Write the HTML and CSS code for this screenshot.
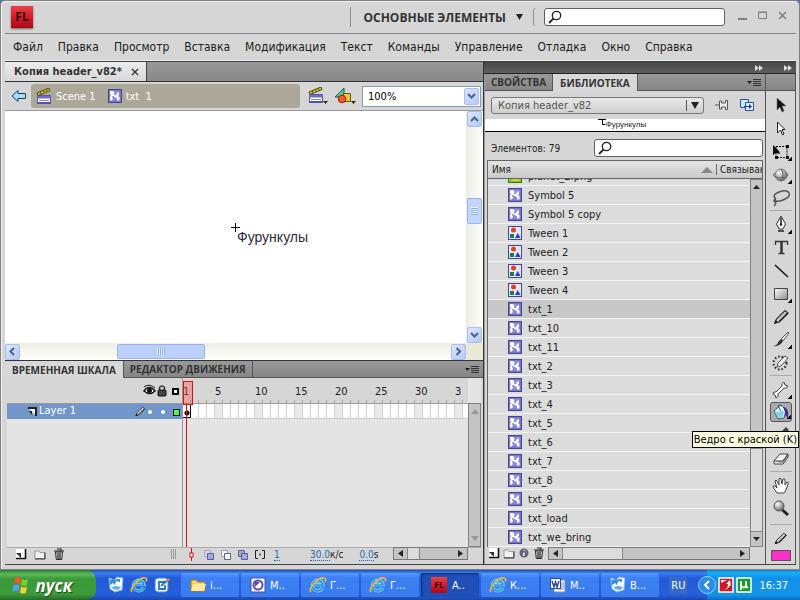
FILE: index.html
```
<!DOCTYPE html>
<html lang="ru">
<head>
    <meta charset="UTF-8">
    <meta name="viewport" content="width=device-width, initial-scale=1.0">
    <title>Копия header_v82</title>
    <link rel="stylesheet" href="styles.css">
</head>
<body>
    <!-- Общие иконки -->
    <svg class="sprite" width="0" height="0">
        <defs>
            <linearGradient id="gRed" x1="0" y1="0" x2="0" y2="1"><stop offset="0" stop-color="#e8434a"/><stop offset=".5" stop-color="#d81a26"/><stop offset="1" stop-color="#a80d18"/></linearGradient>
            <linearGradient id="gMetal" x1="0" y1="0" x2="1" y2="1"><stop offset="0" stop-color="#fff"/><stop offset="1" stop-color="#8a8a8a"/></linearGradient>
            <radialGradient id="gBall" cx=".35" cy=".3" r=".7"><stop offset="0" stop-color="#fff"/><stop offset="1" stop-color="#6c6c6c"/></radialGradient>
        </defs>
        <symbol id="i-search" viewBox="0 0 14 14"><circle cx="8.500" cy="5.500" r="4.200" fill="none" stroke="#222" stroke-width="1.300"/><path d="M5.500 8.500L1 13" stroke="#222" stroke-width="1.800"/></symbol>
        <symbol id="i-scene" viewBox="0 0 16 16"><path d="M1 5L13 0L14 2.500L2 7.500Z" fill="#e0c81e" stroke="#4c4410"/><path d="M4 4l1.500 2M7 2.600l1.500 2M10 1.400l1.500 2" stroke="#4c4410"/><path d="M1.500 7.500H14.500V15.500H1.500Z" fill="#fff" stroke="#5454a8"/><path d="M1.500 8h13v2.500h-13z" fill="#6f6fc4"/><path d="M3 12.500h10" stroke="#8c8cd0"/><path d="M1 15h14" stroke="#5050b0" stroke-width="2"/></symbol>
        <symbol id="i-clip" viewBox="0 0 14 14"><rect x=".5" y=".5" width="13" height="13" fill="#7878c8" stroke="#44449c"/><path d="M2 2h9.500v9.500H2z" fill="#8c8cd8"/><path d="M2 2h3l1.500 1.500L6 6h2l1-2 2-1v3L9.500 7l2 1v3.500H9V9L6.500 8 5 6.500 4 8l1 2-1.500 1.500H2V8l1-2-1-1z" fill="#fff"/></symbol>
        <symbol id="i-tween" viewBox="0 0 14 14"><rect x=".5" y=".5" width="13" height="13" fill="#e4e8ff" stroke="#44449c"/><circle cx="5.500" cy="4" r="2.500" fill="#e8401c"/><rect x="2" y="8" width="4" height="4" fill="#108050"/><path d="M7 12L9.700 7L12.500 12Z" fill="#2b38d0"/></symbol>
        <symbol id="i-png" viewBox="0 0 14 14"><rect x=".5" y=".5" width="13" height="13" fill="#7ac928" stroke="#35791c"/><path d="M3 12L6 8l2 2 2-3 2 5z" fill="#e8c63c"/></symbol>
        <symbol id="i-menu" viewBox="0 0 14 10"><path d="M0 3h5L2.500 6z" fill="#222"/><path d="M6 1.500h8M6 3.500h8M6 5.500h8M6 7.500h8" stroke="#333"/></symbol>
        <symbol id="i-new" viewBox="0 0 12 12"><path d="M1 1h9v9H1z" fill="#fff"/><path d="M10.500 1v9.500H1" fill="none" stroke="#111" stroke-width="1.600"/><path d="M1 5h5v5z" fill="#333"/></symbol>
        <symbol id="i-folder" viewBox="0 0 12 12"><path d="M1 3h4l1 1.500h4.500v6H1z" fill="#f2f2f2" stroke="#999"/><path d="M11 4.500v6.500H1" fill="none" stroke="#333"/></symbol>
        <symbol id="i-trash" viewBox="0 0 12 12"><path d="M2.500 4h7l-.8 7.500H3.300z" fill="#ddd" stroke="#222"/><path d="M1 3h10M4 1h4v2M5 5v6M7 5v6" fill="none" stroke="#222" stroke-width="1.200"/></symbol>
        <symbol id="i-pencil" viewBox="0 0 18 18"><path d="M3 15l1.500-4L13 2.500l3 2.500-9 9z" fill="url(#gMetal)" stroke="#333" stroke-width="1.200"/><path d="M7 14l9-9" stroke="#222" stroke-width="1.500"/><path d="M2 16l1.500-4 2.500 2.500z" fill="#111"/></symbol>
        <symbol id="i-ie" viewBox="0 0 18 18"><path d="M13.700 11.500A5.300 5.300 0 1 1 14 8.500H6" fill="none" stroke="#6fd0ff" stroke-width="3.500"/><path d="M13.700 11.500A5.300 5.300 0 1 1 14 9H6" fill="none" stroke="#1e7ad4" stroke-width="1.200"/><path d="M2 16C-1 13 9 1 15 2c2 0 2 2 1 3.500" fill="none" stroke="#f2b632" stroke-width="1.700"/></symbol>
        <symbol id="i-flash" viewBox="0 0 22 22"><rect width="22" height="22" fill="url(#gRed)"/><text x="11" y="15" text-anchor="middle" font-family="Open Sans" font-weight="700" font-size="12" fill="#260306">FL</text></symbol>
        <symbol id="i-sync" viewBox="0 0 18 18"><path d="M2 2l5 2 3-3 6 1-1 12-7 2-5-3z" fill="#f4f9ff" stroke="#7fb4ea"/><path d="M3 4v5l3-2 2 2 1-4 4 1V3" fill="#2f8ae0"/><path d="M5 11l4-1 5 1-3 3-5-1z" fill="#5aaef0"/></symbol>
    </svg>

    <div class="window">
        <header class="titlebar">
            <svg class="app-logo" width="22" height="22"><use href="#i-flash"/></svg>
            <button class="workspace">ОСНОВНЫЕ ЭЛЕМЕНТЫ <svg width="7" height="6"><path d="M0 0h7L3.500 6z" fill="#222"/></svg></button>
            <label class="search search-top"><svg width="14" height="14"><use href="#i-search"/></svg><input type="text" aria-label="Поиск"></label>
            <div class="win-btns">
                <button aria-label="Свернуть"><svg width="10" height="10"><path d="M0 8h9" stroke="#808080" stroke-width="2"/></svg></button>
                <button aria-label="Развернуть"><svg width="10" height="10"><path d="M.5 1.500h8v6h-8zM0 1h9" fill="none" stroke="#808080"/></svg></button>
                <button aria-label="Закрыть"><svg width="10" height="10"><path d="M1 1l7 7M8 1l-7 7" stroke="#808080" stroke-width="1.500"/></svg></button>
            </div>
        </header>

        <nav class="menu">
            <a href="#">Файл</a><a href="#">Правка</a><a href="#">Просмотр</a><a href="#">Вставка</a><a href="#">Модификация</a><a href="#">Текст</a><a href="#">Команды</a><a href="#">Управление</a><a href="#">Отладка</a><a href="#">Окно</a><a href="#">Справка</a>
        </nav>

        <div class="workarea">
            <main class="document">
                <div class="doc-tabs">
                    <button class="doc-tab">Копия header_v82* <svg width="8" height="8"><path d="M1 1l6 6M7 1L1 7" stroke="#333" stroke-width="1.300"/></svg></button>
                </div>

                <div class="scene-bar">
                    <button class="back" aria-label="Назад"><svg width="16" height="14"><path d="M1 7l6-5.500v3h7.500v5H7v3z" fill="#a6dcff" stroke="#26395c"/></svg></button>
                    <div class="crumbs">
                        <a href="#"><svg width="16" height="16"><use href="#i-scene"/></svg>Scene 1</a>
                        <a href="#"><svg width="14" height="14"><use href="#i-clip"/></svg>txt&nbsp; 1</a>
                    </div>
                    <button aria-label="Сцена"><svg width="20" height="18"><use href="#i-scene" width="16" height="16"/><path d="M15 14h5l-2.500 3z" fill="#332c00"/></svg></button>
                    <button aria-label="Символ"><svg width="22" height="18"><path d="M1 10L10 1v9z" fill="#52c99a" stroke="#205c48"/><path d="M9.500 6.500h7v8h-7z" fill="#eec638" stroke="#6a5410"/><circle cx="8" cy="12" r="3.800" fill="#f05a30" stroke="#9a2408"/><path d="M17 14h5l-2.500 3z" fill="#332c00"/></svg></button>
                    <div class="zoom-box">
                        <select aria-label="Масштаб"><option>100%</option></select>
                        <span class="xp-btn"><svg width="9" height="7"><path d="M1 1l3.500 3.500L8 1" fill="none" stroke="#4d6185" stroke-width="2"/></svg></span>
                    </div>
                </div>

                <div class="stage-wrap">
                    <div class="stage">
                        <svg class="cross" width="9" height="9"><path d="M0 4.500h9M4.500 0v9" stroke="#000"/></svg>
                        <span class="stage-text">Фурункулы</span>
                    </div>
                    <div class="xp-scroll xp-vert">
                        <span class="xp-btn"><svg width="9" height="7"><path d="M1 5l3.500-3.500L8 5" fill="none" stroke="#4d6185" stroke-width="2"/></svg></span>
                        <span class="xp-thumb"></span>
                        <span class="xp-btn"><svg width="9" height="7"><path d="M1 1l3.500 3.500L8 1" fill="none" stroke="#4d6185" stroke-width="2"/></svg></span>
                    </div>
                    <div class="xp-scroll xp-horz">
                        <span class="xp-btn"><svg width="7" height="9"><path d="M5 1L1.500 4.500L5 8" fill="none" stroke="#4d6185" stroke-width="2"/></svg></span>
                        <span class="xp-thumb"></span>
                        <span class="xp-btn"><svg width="7" height="9"><path d="M1.500 1L5 4.500L1.500 8" fill="none" stroke="#4d6185" stroke-width="2"/></svg></span>
                    </div>
                </div>

                <section class="timeline">
                    <div class="panel-tabs">
                        <button class="active">ВРЕМЕННАЯ ШКАЛА</button><button>РЕДАКТОР ДВИЖЕНИЯ</button>
                        <svg class="panel-menu" width="14" height="10"><use href="#i-menu"/></svg>
                    </div>
                    <div class="tl-body">
                        <div class="layers">
                            <div class="tl-head">
                                <svg width="40" height="14"><path d="M1 7q5-7 11 0q-5 5-11 0z" fill="#fff" stroke="#111" stroke-width="1.500"/><circle cx="6.500" cy="6.500" r="2.500" fill="#111"/><path d="M1 3q5-4 11 1" fill="none" stroke="#111"/><rect x="15" y="6" width="8" height="6" rx="1" fill="#444" stroke="#111"/><path d="M16.500 6V3.500q2.500-3 5 0V6" fill="none" stroke="#333" stroke-width="1.500"/><rect x="30" y="5" width="5" height="5" fill="#fff" stroke="#000" stroke-width="2"/></svg>
                            </div>
                            <div class="layer">
                                <svg width="9" height="9"><path d="M0 1h8v8" fill="none" stroke="#222" stroke-width="2"/><path d="M1 2h6v6z" fill="#fff"/><path d="M1 4h3v4z" fill="#222"/></svg>
                                <span class="layer-name">Layer 1</span>
                                <svg width="48" height="14"><use href="#i-pencil" width="12" height="13"/><circle cx="16" cy="7" r="2" fill="#fff"/><circle cx="29" cy="7" r="2" fill="#fff"/><rect x="39.500" y="4.500" width="6" height="6" fill="#4cff4c" stroke="#111"/></svg>
                            </div>
                        </div>
                        <div class="frames">
                            <div class="playhead"></div>
                            <div class="ruler"><span>1</span><span>5</span><span>10</span><span>15</span><span>20</span><span>25</span><span>30</span><span>3</span></div>
                            <div class="cells"><span class="key"></span></div>
                        </div>
                        <div class="vscroll tl-scroll">
                            <svg width="8" height="5"><path d="M0 5h8L4 0z" fill="#999"/></svg>
                            <svg width="8" height="5"><path d="M0 0h8L4 5z" fill="#999"/></svg>
                        </div>
                    </div>
                    <div class="tl-foot">
                        <div class="foot-icons">
                            <svg width="12" height="12"><use href="#i-new"/></svg>
                            <svg width="12" height="12"><use href="#i-folder"/></svg>
                            <svg width="12" height="12"><use href="#i-trash"/></svg>
                            <svg class="grip" width="6" height="12"><path d="M.5 1v10M2.500 1v10M4.500 1v10" stroke="#999"/></svg>
                        </div>
                        <svg class="onion" width="80" height="13"><path d="M4.500 0v13" stroke="#d8101c"/><rect x="3" y="5" width="3" height="4" fill="#fff" stroke="#d8101c"/><g stroke="#5c5c9c"><path d="M17.500 2.500h6v6h-6z" fill="#d6d6e8" stroke="#a8a8cc"/><path d="M20.500 5.500h6v6h-6z" fill="#a8a8d8"/><path d="M34.500 2.500h6v6h-6z" fill="#fff" stroke="#9898c4"/><path d="M37.500 5.500h6v6h-6z" fill="#fff"/><path d="M51.500 2.500h6v6h-6z" fill="#a8a8d8"/><path d="M54.500 5.500h6v6h-6z" fill="#a8a8d8"/><path d="M71 2.500h-2.500v8H71M75 2.500h2.500v8H75" fill="none" stroke="#222"/><path d="M72 6.500h2" stroke-width="2"/></g></svg>
                        <a href="#" class="val-frame">1</a>
                        <span class="val-fps"><a href="#">30.0</a>к/с</span>
                        <span class="val-time"><a href="#">0.0</a>s</span>
                        <div class="hscroll tl-hscroll">
                            <svg width="5" height="7"><path d="M5 0v7L0 3.500z" fill="#222"/></svg><i></i><svg width="5" height="7"><path d="M0 0v7l5-3.500z" fill="#222"/></svg>
                        </div>
                    </div>
                </section>
            </main>

            <aside class="dock">
                <div class="dock-bar">
                    <svg width="8" height="6"><path d="M0 0l4 3-4 3zM4 0l4 3-4 3z" fill="#ddd"/></svg>
                    <svg width="8" height="6"><path d="M0 0l4 3-4 3zM4 0l4 3-4 3z" fill="#ddd"/></svg>
                </div>
                <section class="library">
                    <div class="panel-tabs">
                        <button>СВОЙСТВА</button><button class="active">БИБЛИОТЕКА</button>
                        <svg class="panel-menu" width="14" height="10"><use href="#i-menu"/></svg>
                    </div>
                    <div class="lib-doc">
                        <div class="lib-select">
                            <select aria-label="Документ"><option>Копия header_v82</option></select>
                            <span><svg width="8" height="7"><path d="M0 0h8L4 7z" fill="#222"/></svg></span>
                        </div>
                        <button aria-label="Закрепить"><svg width="14" height="12"><path d="M0 6h5" stroke="#555"/><path d="M4.500 2v8h2v-2h4v2.500h2v-9h-2V4h-4V2z" fill="#eee" stroke="#555"/></svg></button>
                        <button aria-label="Новая библиотека"><svg width="15" height="12"><path d="M.5.500h8v8h-8z" fill="#c8ecff" stroke="#3c4c90"/><path d="M5.500 3.500h8v8h-8z" fill="#d8f0ff" stroke="#3c4c90"/><path d="M4 7h5V5l3 2.500L9 10V8H4z" fill="#2434d8"/></svg></button>
                    </div>
                    <div class="preview"><svg width="8" height="7"><path d="M0 .5h8M4.500 0v5.500h3" fill="none" stroke="#000"/></svg>Фурункулы</div>
                    <div class="lib-find">
                        <label for="libFind">Элементов: 79</label>
                        <div class="search"><svg width="14" height="14"><use href="#i-search"/></svg><input id="libFind" type="text"></div>
                    </div>
                    <div class="lib-head">
                        <span class="col-name">Имя</span>
                        <svg width="12" height="6"><path d="M0 6h12L6 0z" fill="#888"/></svg>
                        <span class="col-link">Связыван</span>
                    </div>
                    <div class="lib-body">
                        <ul class="lib-list">
                            <li><svg width="14" height="14"><use href="#i-png"/></svg>planet_2.png</li>
                            <li><svg width="14" height="14"><use href="#i-clip"/></svg>Symbol 5</li>
                            <li><svg width="14" height="14"><use href="#i-clip"/></svg>Symbol 5 copy</li>
                            <li><svg width="14" height="14"><use href="#i-tween"/></svg>Tween 1</li>
                            <li><svg width="14" height="14"><use href="#i-tween"/></svg>Tween 2</li>
                            <li><svg width="14" height="14"><use href="#i-tween"/></svg>Tween 3</li>
                            <li><svg width="14" height="14"><use href="#i-tween"/></svg>Tween 4</li>
                            <li class="selected"><svg width="14" height="14"><use href="#i-clip"/></svg>txt_1</li>
                            <li><svg width="14" height="14"><use href="#i-clip"/></svg>txt_10</li>
                            <li><svg width="14" height="14"><use href="#i-clip"/></svg>txt_11</li>
                            <li><svg width="14" height="14"><use href="#i-clip"/></svg>txt_2</li>
                            <li><svg width="14" height="14"><use href="#i-clip"/></svg>txt_3</li>
                            <li><svg width="14" height="14"><use href="#i-clip"/></svg>txt_4</li>
                            <li><svg width="14" height="14"><use href="#i-clip"/></svg>txt_5</li>
                            <li><svg width="14" height="14"><use href="#i-clip"/></svg>txt_6</li>
                            <li><svg width="14" height="14"><use href="#i-clip"/></svg>txt_7</li>
                            <li><svg width="14" height="14"><use href="#i-clip"/></svg>txt_8</li>
                            <li><svg width="14" height="14"><use href="#i-clip"/></svg>txt_9</li>
                            <li><svg width="14" height="14"><use href="#i-clip"/></svg>txt_load</li>
                            <li><svg width="14" height="14"><use href="#i-clip"/></svg>txt_we_bring</li>
                        </ul>
                        <div class="vscroll">
                            <svg width="7" height="4"><path d="M0 4h7L3.500 0z" fill="#222"/></svg>
                            <i></i>
                            <svg width="7" height="4"><path d="M0 0h7L3.500 4z" fill="#222"/></svg>
                        </div>
                    </div>
                    <div class="lib-foot">
                        <svg width="12" height="12"><use href="#i-new"/></svg>
                        <svg width="12" height="12"><use href="#i-folder"/></svg>
                        <svg width="12" height="12"><circle cx="6" cy="6" r="4.500" fill="#5c6478"/><path d="M6.500 3v1M6 5.500L5.500 9" stroke="#fff" stroke-width="1.500"/></svg>
                        <svg width="12" height="12"><use href="#i-trash"/></svg>
                        <div class="hscroll">
                            <svg width="5" height="7"><path d="M5 0v7L0 3.500z" fill="#222"/></svg><i></i><svg width="5" height="7"><path d="M0 0v7l5-3.500z" fill="#222"/></svg>
                        </div>
                    </div>
                </section>

                <div class="tools">
                    <div class="tools-head"></div>
                    <button aria-label="Выделение"><svg width="20" height="20"><path d="M6 2v12l3-3 2 5 2-1-2-5h4z" fill="#111" stroke="#666" stroke-width=".5"/></svg></button>
                    <button aria-label="Частичное выделение"><svg width="20" height="20"><path d="M6.500 3v11l3-3 2 5 1.500-1-2-4.500h3z" fill="#fff" stroke="#222"/></svg></button>
                    <button class="more" aria-label="Свободное преобразование"><svg width="20" height="20"><path d="M5 4.500h11v11H5z" fill="none" stroke="#111" stroke-dasharray="2 1"/><path d="M2 3v10l3-2 4 1-1-3z" fill="#111"/><path d="M15 3h3v3h-3zM15 14h3v3h-3zM4 14h3v3H4z" fill="#111"/></svg></button>
                    <button class="more" aria-label="Поворот 3D"><svg width="20" height="20"><circle cx="10" cy="10" r="6" fill="url(#gBall)" stroke="#777"/><path d="M4 8q-5 3 5 5q10 0 7-5M10 4q4 6 0 12" fill="none" stroke="#666"/></svg></button>
                    <button aria-label="Лассо"><svg width="20" height="20"><path d="M5 11Q0 7 8 4t10 1t-6 7t-8-1q-2 2 0 3t-1 4" fill="none" stroke="#555" stroke-width="1.500"/></svg></button>
                    <hr>
                    <button class="more" aria-label="Перо"><svg width="20" height="20"><path d="M10 1l4.500 8-2.500 5H8L5.500 9z" fill="#fff" stroke="#333"/><path d="M10 3v6M7 16h6" stroke="#222" stroke-width="1.500"/><circle cx="10" cy="9.500" r="1.300" fill="#222"/></svg></button>
                    <button aria-label="Текст"><svg width="20" height="20"><path d="M10.500 3v12" stroke="#333" stroke-width="2.500"/><path d="M4.500 7V3.500h12V7M7.500 15.500h6" fill="none" stroke="#333" stroke-width="1.300"/></svg></button>
                    <button aria-label="Линия"><svg width="20" height="20"><path d="M4 4l13 12" stroke="#111" stroke-width="1.500"/></svg></button>
                    <button class="more" aria-label="Прямоугольник"><svg width="20" height="20"><path d="M3.500 4.500h13v11h-13z" fill="url(#gMetal)" stroke="#444"/></svg></button>
                    <button aria-label="Карандаш"><svg width="18" height="18"><use href="#i-pencil"/></svg></button>
                    <button class="more" aria-label="Кисть"><svg width="20" height="20"><path d="M10 9l7-7 1 1-6 8z" fill="#eee" stroke="#555"/><path d="M10 9l2 2q-3 6-10 5q5-1 5-4z" fill="#333"/></svg></button>
                    <button aria-label="Декор"><svg width="20" height="20"><circle cx="9" cy="10" r="6.500" fill="none" stroke="#222" stroke-width="2" stroke-dasharray="1.500 2"/><path d="M6 14l1-4 7-7 3 2-7 8z" fill="#eee" stroke="#555"/></svg></button>
                    <hr>
                    <button class="more" aria-label="Кость"><svg width="20" height="20"><path d="M5 12l6-6q-1-3 2-4l1 3 3 1q-1 3-4 2l-6 6q1 3-2 4l-1-3-2-1q0-3 3-2z" fill="#fafafa" stroke="#444"/></svg></button>
                    <button class="more picked" aria-label="Ведро с краской"><svg width="20" height="18"><path d="M3 8l7-6 5 5-2 8-6 1z" fill="#e6fbff" stroke="#245c78"/><path d="M10 3q-1-3-3 0l3 5" fill="none" stroke="#245c78"/><path d="M4 9l9-1-1 6-5 1z" fill="#88cfe0"/><path d="M12 4q6 0 5 11q-3-2-3-6z" fill="#43248a"/></svg></button>
                    <button aria-label="Пипетка"><svg width="20" height="20"><path d="M3 16l8-9 2 2-8 8zM11 5l4-4 3 3-4 4z" fill="#444"/></svg></button>
                    <button aria-label="Ластик"><svg width="20" height="20"><path d="M3 12l6-7h8l-5 7v3H3z" fill="#f4f4f4" stroke="#444"/><path d="M3 12h9l5-7v3l-5 7" fill="#aaa" stroke="#444"/></svg></button>
                    <hr>
                    <button aria-label="Рука"><svg width="20" height="20"><path d="M6 17l-4-6q0-2 2-1l2 2-2-7q1-2 2 0l2 4V3q1-2 2 0l1 5 1-5q2-1 2 1v5l2-3q2 0 1 2l-2 6-2 3z" fill="#fff" stroke="#444"/></svg></button>
                    <button aria-label="Масштаб"><svg width="20" height="20"><circle cx="8" cy="7" r="5" fill="url(#gBall)" stroke="#555"/><path d="M11.500 11l5.500 5" stroke="#222" stroke-width="3"/></svg></button>
                    <hr class="wide">
                    <button aria-label="Цвет обводки"><svg width="15" height="15"><use href="#i-pencil"/></svg></button>
                    <span class="swatch"></span>
                    <div class="tooltip" role="tooltip">Ведро с краской (K)</div>
                </div>
            </aside>
        </div>
    </div>

    <footer class="taskbar">
        <button class="start"><svg width="19" height="18"><path d="M4 2q3-2 6 0L9 8Q6 6 3 8z" fill="#f0562a"/><path d="M11 3q3 2 6 0l-1 6q-3 2-6 0z" fill="#7ecb2d"/><path d="M2.500 9.500q3-2 6 0l-1 6q-3-2-6 0z" fill="#5b9cf4"/><path d="M10 10.500q3 2 6 0l-1 6q-3 2-6 0z" fill="#ffd12e"/></svg>пуск</button>
        <div class="quick">
            <svg width="18" height="18"><use href="#i-sync"/></svg>
            <svg width="18" height="18"><use href="#i-ie"/></svg>
            <svg width="18" height="18"><rect x="2" y="2" width="13" height="14" rx="3" fill="#f4faff" stroke="#3b8bd0"/><path d="M12 6H6v7h6V9M8 10l8-7" fill="none" stroke="#2a74c8" stroke-width="1.800"/><path d="M13 5l3-3 1 2-3 2z" fill="#f07c28"/></svg>
        </div>
        <div class="tasks">
            <button><svg width="18" height="18"><path d="M2 4h5l2 2h7v9H2z" fill="#f6d568" stroke="#a87c14"/><path d="M4 8h13l-2 7H2z" fill="#ffeb98"/></svg>i...</button>
            <button><svg width="18" height="18"><rect x="2" y="2" width="14" height="14" fill="#fff" stroke="#4c4c9c"/><circle cx="9" cy="9" r="4.500" fill="none" stroke="#54549c" stroke-width="2"/><path d="M6 6h5l-5 5z" fill="#54549c"/></svg>М..</button>
            <button><svg width="18" height="18"><use href="#i-ie"/></svg>Г...</button>
            <button><svg width="18" height="18"><use href="#i-ie"/></svg>Г...</button>
            <button class="active"><svg width="16" height="16"><use href="#i-flash"/></svg>A..</button>
            <button><svg width="18" height="18"><use href="#i-ie"/></svg>К...</button>
            <button><svg width="18" height="18"><path d="M5 4h11v12H5z" fill="#fff" stroke="#888"/><path d="M8 7h7M8 9h7M8 11h7M8 13h7" stroke="#6d8fc8"/><rect x="1.500" y="2.500" width="10" height="10" fill="#fff" stroke="#2a4c9c"/><path d="M3 5l2 6 1.500-5L8 11l2-6" fill="none" stroke="#2a4c9c" stroke-width="1.500"/></svg>М..</button>
            <button><svg width="18" height="18"><use href="#i-sync"/></svg>В...</button>
        </div>
        <span class="lang">RU</span>
        <div class="tray">
            <svg class="chev" width="18" height="18"><circle cx="9" cy="9" r="8.500" fill="#2a8bea" stroke="#8fd0ff"/><path d="M11 5L7 9l4 4" fill="none" stroke="#fff" stroke-width="2"/></svg>
            <svg width="16" height="16"><rect x="1" y="1" width="14" height="14" fill="#d4141e" stroke="#fff" stroke-width="1.500"/><path d="M3 13q7 0 7-6H8l4-4 1 6-1-1q-1 5-9 5zM3 3h6L3 6z" fill="#fff"/></svg>
            <svg width="16" height="16"><rect x="1" y="1" width="14" height="14" fill="#169a28" stroke="#fff" stroke-width="1.500"/><path d="M5 13V4M5 9q3 3 5 0V4M10 9q0 2 2 1" fill="none" stroke="#fff" stroke-width="2"/></svg>
            <time>16:37</time>
        </div>
    </footer>
</body>
</html>
```

FILE: styles.css
```
* {
    box-sizing: border-box;
}
body, html {
    margin: 0;
    padding: 0;
    height: 100%;
}
body {
    display: flex;
    flex-direction: column;
    overflow: hidden;
    background: #5a6ea8;
    font-family: "DejaVu Sans Condensed", "Open Sans", sans-serif;
    font-size: 11px;
    color: #1c1c1c;
}
button, select, input {
    margin: 0;
    padding: 0;
    border: none;
    background: none;
    font: inherit;
    color: inherit;
    appearance: none;
    outline: none;
}
button {
    display: flex;
    align-items: center;
    justify-content: center;
    white-space: nowrap;
}
svg {
    display: block;
    flex: none;
}
a {
    color: inherit;
    text-decoration: none;
}
.sprite {
    position: absolute;
}

/* Окно */
.window {
    flex: 1;
    min-height: 0;
    display: flex;
    flex-direction: column;
    padding: 0 3px 4px 4px;
    background: #d6d6d6;
    border: 1px solid #808080;
    border-radius: 5px 5px 0 0;
    box-shadow: inset 1px 1px #f2f2f2;
}
.titlebar {
    display: flex;
    align-items: center;
    height: 33px;
    border-bottom: 1px solid #858585;
}
.app-logo {
    margin-left: 6px;
    box-shadow: 0 1px 2px #666;
}
.workspace {
    margin-left: auto;
    height: 20px;
    padding: 0 21px 0 12px;
    gap: 10px;
    border-left: 1px solid #909090;
    font-family: "Open Sans", sans-serif;
    font-size: 12px;
    font-weight: bold;
    color: #333;
}
.search {
    display: flex;
    align-items: center;
    height: 18px;
    padding-left: 3px;
    background: #fff;
    border: 1px solid #606060;
    border-radius: 3px;
}
.search input {
    flex: 1;
    min-width: 0;
}
.search-top {
    width: 181px;
    box-shadow: -10px 0 #d6d6d6, -11px 0 #909090;
}
.win-btns {
    display: flex;
    gap: 10px;
    margin: 0 8px 2px 13px;
}
.menu {
    display: flex;
    align-items: center;
    gap: 15px;
    height: 27px;
    padding-left: 8px;
    font-size: 12px;
    border-bottom: 1px solid #eee;
}
.workarea {
    flex: 1;
    min-height: 0;
    display: flex;
    border: 1px solid #444;
    border-width: 1px 0;
}

/* Документ */
.document {
    flex: 1;
    min-width: 0;
    display: flex;
    flex-direction: column;
    border-right: 1px solid #333;
}
.doc-tabs {
    height: 20px;
    display: flex;
    background: linear-gradient(#999, #888);
    border-bottom: 1px solid #333;
}
.doc-tab {
    gap: 9px;
    padding: 0 7px 0 9px;
    background: linear-gradient(#ececec, #d8d8d8);
    border-right: 1px solid #444;
    font-weight: bold;
    font-size: 11px;
    color: #333;
}
.scene-bar {
    display: flex;
    align-items: center;
    height: 29px;
    padding: 0 2px 0 6px;
    gap: 6px;
    border-bottom: 1px solid #999;
}
.crumbs {
    flex: 1;
    display: flex;
    align-items: center;
    gap: 12px;
    height: 24px;
    padding-left: 5px;
    margin: 0 2px 0 -2px;
    background: #aca899;
    border-radius: 3px;
    color: #fff;
}
.crumbs a {
    display: flex;
    align-items: center;
    gap: 4px;
}
.zoom-box {
    display: flex;
    width: 119px;
    height: 21px;
    padding: 1px;
    background: #fff;
    border: 1px solid #7f9db9;
}
.zoom-box select {
    flex: 1;
    padding-left: 4px;
    color: #000;
}
.xp-btn {
    flex: none;
    display: flex;
    align-items: center;
    justify-content: center;
    width: 15px;
    height: 16px;
    border: 1px solid #a9bff0;
    border-radius: 2px;
    background: linear-gradient(135deg, #dbe6ff, #b4c9f8);
}
.zoom-box .xp-btn {
    height: 17px;
}
.stage-wrap {
    flex: 1;
    min-height: 0;
    display: grid;
    grid-template: 1fr 17px / 1fr 17px;
    background: #ece9d8;
}
.stage {
    position: relative;
    background: #fff;
}
.cross {
    position: absolute;
    left: 226px;
    top: 112px;
}
.stage-text {
    position: absolute;
    left: 232px;
    top: 118px;
    font-family: "Liberation Sans", sans-serif;
    font-size: 14px;
    line-height: 16px;
    color: #2c2c40;
}
.xp-scroll {
    display: flex;
    align-items: center;
    background: #f6f5f0;
}
.xp-vert {
    flex-direction: column;
    background: linear-gradient(90deg, #eeede5, #fefefb);
}
.xp-horz {
    background: linear-gradient(#eeede5, #fefefb);
}
.xp-thumb {
    border: 1px solid #98b4ea;
    border-radius: 2px;
}
.xp-vert .xp-thumb {
    width: 15px;
    height: 26px;
    margin: 71px 0 auto;
    background: repeating-linear-gradient(#eef4ff 0 1px, #8caee8 1px 2px) center / 7px 8px no-repeat, #c5d5fc;
}
.xp-horz .xp-thumb {
    width: 88px;
    height: 15px;
    margin: 0 auto 0 97px;
    background: repeating-linear-gradient(90deg, #eef4ff 0 1px, #8caee8 1px 2px) center / 8px 7px no-repeat, #bdd0fb;
}

/* Вкладки панелей */
.panel-tabs {
    display: flex;
    flex: none;
    height: 17px;
    background: linear-gradient(#999, #868686);
    border-bottom: 1px solid #555;
}
.panel-tabs button {
    padding: 0 6px;
    border-right: 1px solid #555;
    font-family: "Open Sans", sans-serif;
    font-size: 10px;
    font-weight: bold;
    color: #333;
}
.panel-tabs .active {
    height: 17px;
    padding: 0 7px;
    background: #d8d8d8;
}
.panel-menu {
    margin: 4px 4px 0 auto;
}

/* Шкала времени */
.timeline {
    height: 204px;
    display: flex;
    flex-direction: column;
    border-top: 1px solid #333;
}
.tl-body {
    flex: 1;
    display: flex;
    margin: 0 2px;
    background: #e4e4e4;
}
.layers {
    width: 176px;
    border-right: 1px solid #999;
}
.tl-head {
    height: 26px;
    padding: 6px 0 0 136px;
    background: #d6d6d6;
    border-bottom: 1px solid #999;
}
.layer {
    display: flex;
    align-items: center;
    height: 15px;
    padding-left: 21px;
    gap: 2px;
    background: #7096cc;
    color: #fff;
}
.layer-name {
    flex: 1;
    line-height: 13px;
    padding-bottom: 2px;
}
.frames {
    position: relative;
    flex: 1;
    min-width: 0;
    overflow: hidden;
}
.ruler {
    display: flex;
    height: 26px;
    padding-top: 7px;
    border-bottom: 1px solid #999;
    background: repeating-linear-gradient(90deg, transparent 0 7px, #aaa68f 7px 8px) 0 22px / 100% 3px no-repeat, #d6d6d6;
}
.ruler span {
    flex: none;
    width: 40px;
}
.ruler span:first-child {
    width: 32px;
}
.cells {
    height: 15px;
    border-bottom: 1px solid #ccc;
    background: repeating-linear-gradient(90deg, transparent 0 7px, #d2d2d2 7px 8px), repeating-linear-gradient(90deg, #fff 0 32px, #e9e9e9 32px 40px);
}
.key {
    display: block;
    width: 8px;
    height: 14px;
    border: 1px solid #000;
    border-width: 0 1px 1px 0;
    background: radial-gradient(circle at 4px 9px, #000 2px, transparent 3px);
}
.playhead {
    position: absolute;
    left: 0;
    top: 3px;
    bottom: 0;
    width: 8px;
    background: linear-gradient(#d8101c, #d8101c) 3px 22px / 1px 100% no-repeat;
}
.playhead::before {
    content: "";
    display: block;
    width: 8px;
    height: 22px;
    border: 1px solid #d8101c;
    background: rgba(255, 90, 70, .4);
}
.vscroll {
    flex: none;
    width: 13px;
    display: flex;
    flex-direction: column;
    align-items: center;
    justify-content: space-between;
    padding: 5px 0;
    background: #c4c4c4;
    border: 1px solid #808080;
}
.tl-scroll {
    margin-top: 25px;
}
.tl-foot {
    display: flex;
    height: 17px;
    margin: 0 2px;
    border-top: 1px solid #aaa;
    font-size: 10px;
    line-height: 14px;
}
.tl-foot a {
    color: #2a6ab4;
    border-bottom: 1px dotted #2a6ab4;
}
.foot-icons {
    display: flex;
    gap: 7px;
    width: 176px;
    padding-left: 8px;
}
.grip {
    margin: 0 6px 0 auto;
}
.onion {
    margin-left: 4px;
}
.val-frame {
    width: 6px;
    height: 13px;
    margin-left: 7px;
}
.val-fps {
    margin-left: 30px;
}
.val-time {
    margin-left: 16px;
}
.hscroll {
    flex: none;
    display: flex;
    align-items: center;
    height: 13px;
    padding: 0 4px;
    background: #c4c4c4;
    border: 1px solid #777;
}
.hscroll i {
    height: 11px;
    margin: 0 auto 0 4px;
    background: #dcdcdc;
    border: 1px solid #888;
    border-width: 0 1px;
}
.tl-hscroll {
    width: 75px;
    margin: -1px 13px 0 auto;
}
.tl-hscroll i {
    width: 13px;
}

/* Правая панель */
.dock {
    width: 312px;
    display: grid;
    grid-template: 12px 1fr / 1fr 30px;
    border-right: 1px solid #555;
}
.dock-bar {
    grid-column: 1 / 3;
    display: flex;
    align-items: center;
    justify-content: flex-end;
    gap: 21px;
    padding-right: 3px;
    background: linear-gradient(#454545, #606060);
    border-bottom: 1px solid #222;
}
.library {
    min-width: 0;
    min-height: 0;
    display: flex;
    flex-direction: column;
    border-left: 1px solid #999;
}
.lib-doc {
    display: flex;
    align-items: center;
    height: 28px;
    padding: 0 10px 0 6px;
    gap: 11px;
}
.lib-select {
    flex: 1;
    display: flex;
    align-items: center;
    height: 17px;
    border: 1px solid #777;
    border-radius: 3px;
    background: linear-gradient(#e8e8e8, #cfcfcf);
}
.lib-select select {
    flex: 1;
    padding-left: 6px;
    color: #555;
}
.lib-select span {
    padding: 2px 4px;
    border-left: 1px solid #555;
}
.preview {
    display: flex;
    justify-content: center;
    height: 13px;
    padding-right: 6px;
    background: #fff;
    border-bottom: 1px solid #000;
    font-family: "Liberation Sans", sans-serif;
    font-size: 8px;
    line-height: 12px;
}
.lib-find {
    display: flex;
    align-items: center;
    height: 28px;
    padding: 4px 2px 0 6px;
    font-size: 10px;
}
.lib-find label {
    width: 103px;
}
.lib-find .search {
    flex: 1;
}
.lib-head {
    display: flex;
    align-items: center;
    height: 19px;
    margin: 0 2px;
    padding-left: 4px;
    border: 1px solid #666;
    background: linear-gradient(#e4e4e4, #cacaca);
    font-size: 10px;
    overflow: hidden;
}
.col-name {
    flex: 1;
}
.col-link {
    width: 46px;
    margin-left: 3px;
    padding-left: 3px;
    border-left: 1px solid #666;
    overflow: hidden;
}
.lib-body {
    flex: 1;
    min-height: 0;
    display: flex;
    margin: 0 2px;
    border-left: 1px solid #666;
}
.lib-list {
    flex: 1;
    display: flex;
    flex-direction: column;
    justify-content: flex-end;
    margin: 0;
    padding: 0;
    list-style: none;
    overflow: hidden;
    background: #dcdcdc;
}
.lib-list li {
    flex: none;
    display: flex;
    align-items: center;
    gap: 6px;
    height: 19px;
    padding-left: 20px;
    border-bottom: 1px solid #f4f4f4;
}
.lib-list .selected {
    background: #c8c8c8;
}
.lib-body .vscroll i {
    width: 11px;
    height: 84px;
    margin: auto 0 5px;
    background: #dcdcdc;
    border: 1px solid #888;
    border-width: 1px 0;
}
.lib-foot {
    display: flex;
    gap: 3px;
    height: 17px;
    padding-left: 3px;
}
.lib-foot .hscroll {
    flex: 1;
    margin-right: 15px;
}
.lib-foot .hscroll i {
    width: 61px;
}

/* Инструменты */
.tools {
    position: relative;
    display: flex;
    flex-direction: column;
    align-items: center;
    border-left: 1px solid #555;
}
.tools-head {
    width: 100%;
    height: 17px;
    margin-bottom: 3px;
    background: linear-gradient(#999, #868686);
    border-bottom: 1px solid #555;
}
.tools button {
    flex: none;
    width: 22px;
    height: 23px;
}
.tools .more {
    background: linear-gradient(135deg, transparent 50%, #111 50%) right 0 bottom 2px / 4px 4px no-repeat;
}
.tools .picked {
    height: 20px;
    margin: 1px 0 2px;
    border: 1px solid #555;
    border-radius: 3px;
    background-color: #aaa;
}
.tools hr {
    width: 22px;
    margin: 1px 0 2px;
    border: none;
    border-top: 1px solid #aaa;
}
.tools .wide {
    margin: 4px 0 2px;
}
.swatch {
    width: 20px;
    height: 11px;
    background: #ff2fc8;
    border: 1px solid #555;
}
.tooltip {
    position: absolute;
    right: -4px;
    top: 357px;
    padding: 0 1px;
    border: 1px solid #000;
    background: #ffffe1;
    color: #000;
    font-size: 11px;
    line-height: 15px;
    white-space: nowrap;
}

/* Панель задач */
.taskbar {
    flex: none;
    display: flex;
    align-items: center;
    height: 30px;
    background: linear-gradient(#1f4fc0, #3a80f0 3px, #2459d8 8px, #2560dc 25px, #1c45a8);
    color: #fff;
}
.start {
    width: 96px;
    height: 30px;
    gap: 5px;
    padding-right: 12px;
    border-radius: 0 10px 10px 0;
    background: linear-gradient(#2b7a2b, #5eb85a 4px, #3a9a3a 9px, #3c9c3c 24px, #256c25);
    font-family: "Open Sans", sans-serif;
    font-size: 17px;
    font-weight: bold;
    font-style: italic;
    text-shadow: 1px 1px 1px #1a4a1a;
}
.quick {
    display: flex;
    gap: 5px;
    padding: 0 10px 0 11px;
}
.tasks {
    flex: 1;
    min-width: 0;
    display: flex;
    gap: 2px;
}
.tasks button {
    flex: 1;
    max-width: 58px;
    height: 24px;
    justify-content: flex-start;
    gap: 3px;
    padding-left: 8px;
    border-radius: 2px;
    background: linear-gradient(#5a96ff, #3c80f4 5px, #3a7cf0);
}
.tasks .active {
    gap: 5px;
    padding-left: 10px;
    background: #1e50b8;
    box-shadow: inset 1px 1px 2px #0c2c70;
}
.lang {
    padding: 2px;
    margin-right: 20px;
    background: #3568c8;
}
.tray {
    display: flex;
    align-items: center;
    gap: 2px;
    height: 30px;
    padding-right: 12px;
    background: linear-gradient(#1280d8, #18b0f4 3px, #1290e8 8px, #1294ea 25px, #0e6cc0);
}
.chev {
    margin-left: -9px;
}
.tray time {
    margin-left: 5px;
}
```
